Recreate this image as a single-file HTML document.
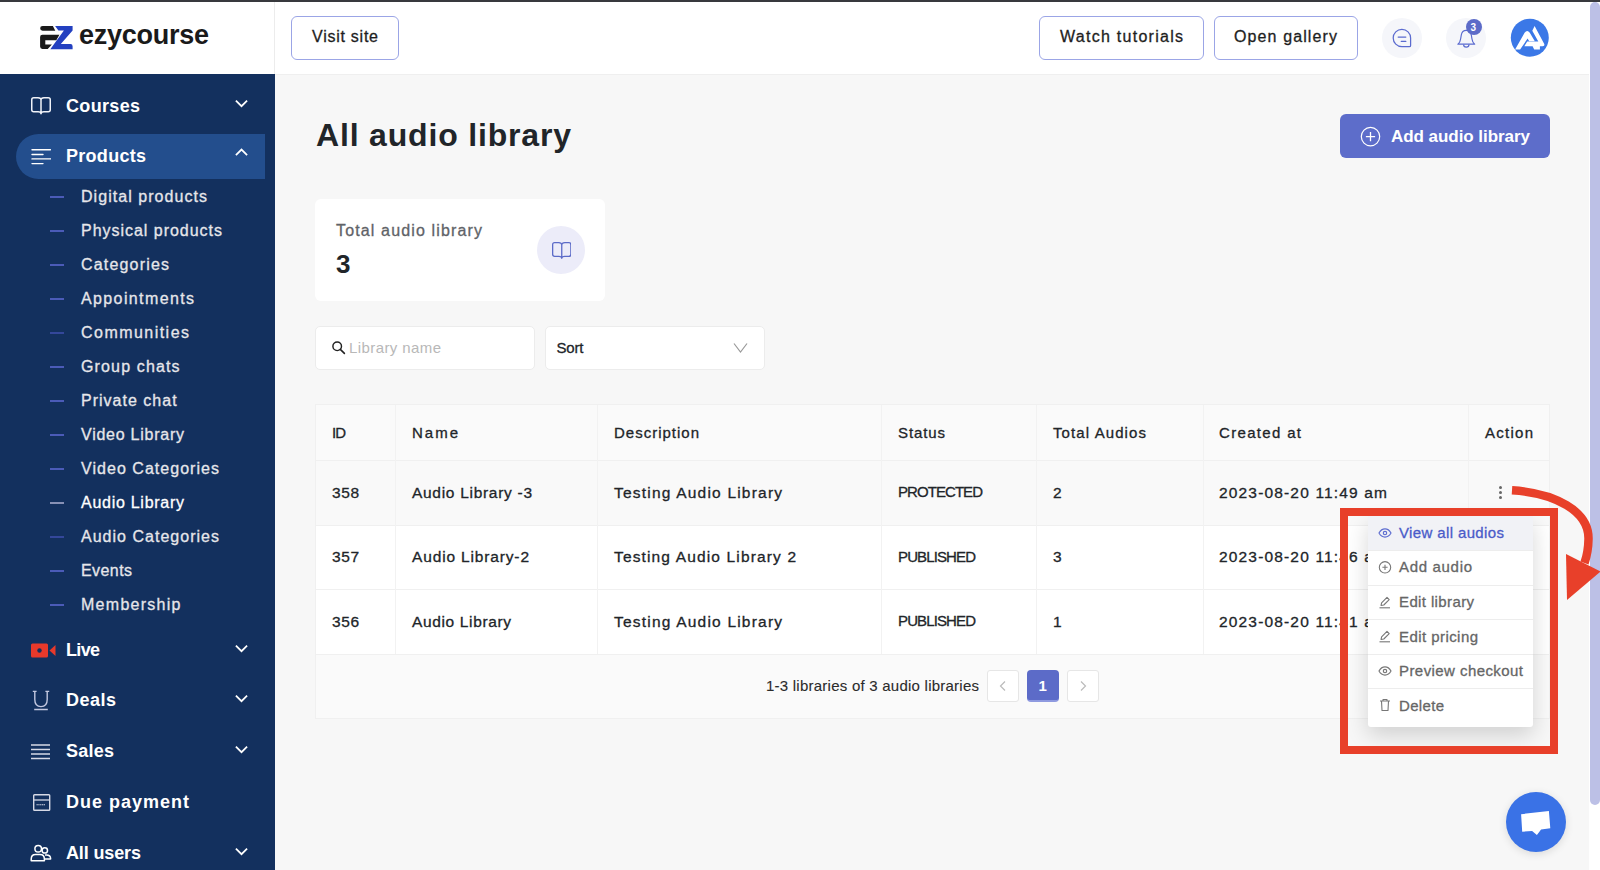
<!DOCTYPE html>
<html><head><meta charset="utf-8"><style>
html,body{margin:0;padding:0;width:1600px;height:870px;overflow:hidden;background:#f7f7f7}
body{position:relative;font-family:"Liberation Sans",sans-serif}
.t{position:absolute;white-space:nowrap;line-height:1}
</style></head><body>
<div style="position:absolute;left:0px;top:0px;width:1600px;height:870px;background:#f7f7f7"></div>
<div style="position:absolute;left:0px;top:0px;width:1600px;height:2px;background:#38393d"></div>
<div style="position:absolute;left:0px;top:2px;width:1590px;height:72px;background:#fff"></div>
<div style="position:absolute;left:275px;top:74px;width:1315px;height:1px;background:#efefef"></div>
<div style="position:absolute;left:274px;top:2px;width:1px;height:72px;background:#ececec"></div>
<div style="position:absolute;left:0px;top:74px;width:275px;height:796px;background:#13305e"></div>
<div style="position:absolute;left:1589px;top:2px;width:11px;height:868px;background:#ffffff"></div>
<div style="position:absolute;left:1590px;top:2px;width:10px;height:803px;background:#bcc0e6;border-radius:5px"></div>
<svg style="position:absolute;left:36px;top:22px" width="40" height="30" viewBox="0 0 40 30">
<path d="M6.6 3.9 H16.9 L19.3 8.8 H6.6 A2.45 2.45 0 0 1 6.6 3.9Z" fill="#1a1a1a"/>
<path d="M6.4 12.8 H23.4 L20.3 18.3 H9.3 V22.4 H15.9 L11.7 26.9 H6.4 Q4.1 26.9 4.1 24.6 V15.1 Q4.1 12.8 6.4 12.8Z" fill="#1a1a1a"/>
<path d="M19.1 4 H36.6 V8.4 L24.8 22.1 H34.5 Q36.6 22.1 36.6 24.2 V27.2 H14.3 L27.9 8.4 H22.4Z" fill="#2340c0"/>
</svg>
<div class="t" style="top:22.14px;font-size:27px;color:#1a1a1a;font-weight:700;letter-spacing:-0.259px;left:79px;">ezycourse</div>
<div style="position:absolute;left:291px;top:16px;width:108px;height:44px;border:1px solid #9ba5e6;border-radius:6px;box-sizing:border-box;background:#fff"></div>
<div class="t" style="top:29.36px;font-size:16px;color:#1e1e1e;-webkit-text-stroke:0.3px #1e1e1e;letter-spacing:0.747px;left:312px;">Visit site</div>
<div style="position:absolute;left:1039px;top:16px;width:165px;height:44px;border:1px solid #9ba5e6;border-radius:6px;box-sizing:border-box;background:#fff"></div>
<div class="t" style="top:29.46px;font-size:16px;color:#1e1e1e;-webkit-text-stroke:0.3px #1e1e1e;letter-spacing:1.270px;left:1060px;">Watch tutorials</div>
<div style="position:absolute;left:1214px;top:16px;width:144px;height:44px;border:1px solid #9ba5e6;border-radius:6px;box-sizing:border-box;background:#fff"></div>
<div class="t" style="top:29.46px;font-size:16px;color:#1e1e1e;-webkit-text-stroke:0.3px #1e1e1e;letter-spacing:1.116px;left:1234px;">Open gallery</div>
<div style="position:absolute;left:1382px;top:18px;width:40px;height:40px;background:#f5f6fa;border-radius:50%"></div>
<div style="position:absolute;left:1446px;top:18px;width:40px;height:40px;background:#f5f6fa;border-radius:50%"></div>
<svg style="position:absolute;left:1391px;top:27px" width="22" height="22" viewBox="0 0 22 22">
<path d="M19.6 11 A8.7 8.7 0 1 0 10.9 19.7 H18.3 Q19.6 19.7 19.6 18.4Z" fill="none" stroke="#5b6bcf" stroke-width="1.25"/>
<path d="M7.2 10.1 H14.8 M10.3 14.4 H14.8" stroke="#5b6bcf" stroke-width="1.3" stroke-linecap="round"/>
</svg>
<svg style="position:absolute;left:1455px;top:27px" width="22" height="22" viewBox="0 0 22 22">
<path d="M2.9 17.2 Q5.2 15.5 5.6 12 L6.3 8 Q7 3.3 11.3 3.3 Q15.6 3.3 16.3 8 L17 12 Q17.4 15.5 19.7 17.2Z" fill="none" stroke="#5b6bcf" stroke-width="1.2" stroke-linejoin="round"/>
<path d="M8.6 17.4 A2.7 2.7 0 0 0 14 17.4" fill="none" stroke="#5b6bcf" stroke-width="1.2"/>
</svg>
<div style="position:absolute;left:1466px;top:19px;width:16px;height:16px;background:#5c6bc8;border-radius:50%"></div>
<div class="t" style="top:23.04px;font-size:10px;color:#fff;font-weight:700;left:1470.5px;">3</div>
<svg style="position:absolute;left:1508px;top:16px" width="44" height="44" viewBox="0 0 44 44">
<circle cx="21.8" cy="21.7" r="19" fill="#3b78e7"/>
<path d="M7.1 33.4 L16.6 16.8 Q19.2 13.2 21.8 16.8 L26.8 25.3 H21.2 L19.6 22.6 L12.1 33.4Z" fill="#fff"/>
<path d="M24.3 14.7 L26.6 9.9 L36.4 28.3 Q36.8 30.3 34.6 30.3 H31.9 V33.4 H26.2 L24.6 30.3 H16.3 L19.2 25.6 H30.3Z" fill="#fff"/>
</svg>
<div style="position:absolute;left:16px;top:134px;width:249px;height:45px;background:#234e8d;border-radius:23px 0 0 23px"></div>
<div class="t" style="top:96.76px;font-size:18px;color:#ffffff;font-weight:700;letter-spacing:0.329px;left:66px;">Courses</div>
<svg style="position:absolute;left:235px;top:99px" width="13" height="9" viewBox="0 0 13 9"><path d="M0.9 1.6 L6.5 7.2 L12.1 1.6" fill="none" stroke="#fff" stroke-width="1.75"/></svg>
<svg style="position:absolute;left:31px;top:97px" width="20" height="18.5" viewBox="0 0 20 18.5"><path d="M10.0 2.95 Q10.0 0.75 7.0 0.75 H2.75 Q0.75 0.75 0.75 2.75 V12.75 Q0.75 14.75 2.75 14.75 H7.0 Q10.0 14.75 10.0 16.75 M10.0 2.95 Q10.0 0.75 13.0 0.75 H17.25 Q19.25 0.75 19.25 2.75 V12.75 Q19.25 14.75 17.25 14.75 H13.0 Q10.0 14.75 10.0 16.75 V2.95" fill="none" stroke="#f0f2f8" stroke-width="1.5" stroke-linejoin="round"/></svg>
<div class="t" style="top:147.06px;font-size:18px;color:#ffffff;font-weight:700;letter-spacing:0.284px;left:66px;">Products</div>
<svg style="position:absolute;left:235px;top:148px" width="13" height="9" viewBox="0 0 13 9"><path d="M0.9 7.2 L6.5 1.6 L12.1 7.2" fill="none" stroke="#fff" stroke-width="1.75"/></svg>
<svg style="position:absolute;left:31px;top:148px" width="20" height="17" viewBox="0 0 20 17">
<path d="M1 1.8 H19.5 M1 6.5 H12 M1 10.9 H19.5 M1 15.6 H12" stroke="#fff" stroke-width="1.4" stroke-linecap="round"/>
</svg>
<div style="position:absolute;left:50px;top:196.3px;width:14px;height:1.5px;background:#4b5bb8"></div>
<div class="t" style="top:188.76px;font-size:16px;color:#e6e6ea;-webkit-text-stroke:0.3px #e6e6ea;letter-spacing:1.048px;left:81px;">Digital products</div>
<div style="position:absolute;left:50px;top:230.3px;width:14px;height:1.5px;background:#4b5bb8"></div>
<div class="t" style="top:222.76px;font-size:16px;color:#e6e6ea;-webkit-text-stroke:0.3px #e6e6ea;letter-spacing:0.976px;left:81px;">Physical products</div>
<div style="position:absolute;left:50px;top:264.3px;width:14px;height:1.5px;background:#4b5bb8"></div>
<div class="t" style="top:256.76px;font-size:16px;color:#e6e6ea;-webkit-text-stroke:0.3px #e6e6ea;letter-spacing:1.181px;left:81px;">Categories</div>
<div style="position:absolute;left:50px;top:298.3px;width:14px;height:1.5px;background:#4b5bb8"></div>
<div class="t" style="top:290.76px;font-size:16px;color:#e6e6ea;-webkit-text-stroke:0.3px #e6e6ea;letter-spacing:1.379px;left:81px;">Appointments</div>
<div style="position:absolute;left:50px;top:332.3px;width:14px;height:1.5px;background:#34479a"></div>
<div class="t" style="top:324.76px;font-size:16px;color:#e6e6ea;-webkit-text-stroke:0.3px #e6e6ea;letter-spacing:1.464px;left:81px;">Communities</div>
<div style="position:absolute;left:50px;top:366.3px;width:14px;height:1.5px;background:#4b5bb8"></div>
<div class="t" style="top:358.76px;font-size:16px;color:#e6e6ea;-webkit-text-stroke:0.3px #e6e6ea;letter-spacing:1.144px;left:81px;">Group chats</div>
<div style="position:absolute;left:50px;top:400.3px;width:14px;height:1.5px;background:#4b5bb8"></div>
<div class="t" style="top:392.76px;font-size:16px;color:#e6e6ea;-webkit-text-stroke:0.3px #e6e6ea;letter-spacing:1.011px;left:81px;">Private chat</div>
<div style="position:absolute;left:50px;top:434.3px;width:14px;height:1.5px;background:#4b5bb8"></div>
<div class="t" style="top:426.76px;font-size:16px;color:#e6e6ea;-webkit-text-stroke:0.3px #e6e6ea;letter-spacing:0.751px;left:81px;">Video Library</div>
<div style="position:absolute;left:50px;top:468.3px;width:14px;height:1.5px;background:#4b5bb8"></div>
<div class="t" style="top:460.76px;font-size:16px;color:#e6e6ea;-webkit-text-stroke:0.3px #e6e6ea;letter-spacing:1.036px;left:81px;">Video Categories</div>
<div style="position:absolute;left:50px;top:502.3px;width:14px;height:1.5px;background:#8790b5"></div>
<div class="t" style="top:494.76px;font-size:16px;color:#ffffff;-webkit-text-stroke:0.3px #ffffff;letter-spacing:0.727px;left:81px;">Audio Library</div>
<div style="position:absolute;left:50px;top:536.3px;width:14px;height:1.5px;background:#34479a"></div>
<div class="t" style="top:528.76px;font-size:16px;color:#e6e6ea;-webkit-text-stroke:0.3px #e6e6ea;letter-spacing:1.017px;left:81px;">Audio Categories</div>
<div style="position:absolute;left:50px;top:570.3px;width:14px;height:1.5px;background:#4b5bb8"></div>
<div class="t" style="top:562.76px;font-size:16px;color:#e6e6ea;-webkit-text-stroke:0.3px #e6e6ea;letter-spacing:0.417px;left:81px;">Events</div>
<div style="position:absolute;left:50px;top:604.3px;width:14px;height:1.5px;background:#4b5bb8"></div>
<div class="t" style="top:596.76px;font-size:16px;color:#e6e6ea;-webkit-text-stroke:0.3px #e6e6ea;letter-spacing:1.274px;left:81px;">Membership</div>
<div class="t" style="top:640.76px;font-size:18px;color:#ffffff;font-weight:700;letter-spacing:-0.673px;left:66px;">Live</div>
<svg style="position:absolute;left:235px;top:644px" width="13" height="9" viewBox="0 0 13 9"><path d="M0.9 1.6 L6.5 7.2 L12.1 1.6" fill="none" stroke="#fff" stroke-width="1.75"/></svg>
<svg style="position:absolute;left:31px;top:643px" width="25" height="15" viewBox="0 0 25 15">
<rect x="0" y="0.5" width="17" height="14" rx="1.5" fill="#e8392b"/><circle cx="8.5" cy="7.5" r="2.2" fill="#13305e"/>
<path d="M18.5 7.5 L24.5 2 V13Z" fill="#e8392b"/>
</svg>
<div class="t" style="top:690.96px;font-size:18px;color:#ffffff;font-weight:700;letter-spacing:0.492px;left:66px;">Deals</div>
<svg style="position:absolute;left:235px;top:694px" width="13" height="9" viewBox="0 0 13 9"><path d="M0.9 1.6 L6.5 7.2 L12.1 1.6" fill="none" stroke="#fff" stroke-width="1.75"/></svg>
<svg style="position:absolute;left:31px;top:689px" width="20" height="22" viewBox="0 0 20 22">
<path d="M3.8 2.3 V10.5 Q3.8 17.6 10 17.6 Q16.2 17.6 16.2 10.5 V2.3" fill="none" stroke="#c3c8e0" stroke-width="1.4"/>
<path d="M1.8 2.3 H5.6 M14.4 2.3 H18.2 M3.2 20.5 H16.8" stroke="#c3c8e0" stroke-width="1.3"/>
</svg>
<div class="t" style="top:742.16px;font-size:18px;color:#ffffff;font-weight:700;letter-spacing:0.240px;left:66px;">Sales</div>
<svg style="position:absolute;left:235px;top:745px" width="13" height="9" viewBox="0 0 13 9"><path d="M0.9 1.6 L6.5 7.2 L12.1 1.6" fill="none" stroke="#fff" stroke-width="1.75"/></svg>
<svg style="position:absolute;left:31px;top:744px" width="20" height="16" viewBox="0 0 20 16">
<path d="M0 1 H19 M0 5.5 H19 M0 10 H19 M0 14.5 H19" stroke="#d6d9e6" stroke-width="1.3"/>
</svg>
<div class="t" style="top:792.96px;font-size:18px;color:#ffffff;font-weight:700;letter-spacing:0.997px;left:66px;">Due payment</div>
<svg style="position:absolute;left:32px;top:793px" width="19" height="19" viewBox="0 0 19 19">
<rect x="1.7" y="1.7" width="16" height="15.6" rx="0.8" fill="none" stroke="#d6d9e6" stroke-width="1.4"/>
<path d="M1.7 7 H17.7" stroke="#d6d9e6" stroke-width="1.3"/>
<path d="M4.5 11.7 H13.5" stroke="#d6d9e6" stroke-width="1.1" stroke-dasharray="1.3 0.5"/>
</svg>
<div class="t" style="top:844.26px;font-size:18px;color:#ffffff;font-weight:700;letter-spacing:-0.129px;left:66px;">All users</div>
<svg style="position:absolute;left:235px;top:847px" width="13" height="9" viewBox="0 0 13 9"><path d="M0.9 1.6 L6.5 7.2 L12.1 1.6" fill="none" stroke="#fff" stroke-width="1.75"/></svg>
<svg style="position:absolute;left:30px;top:843px" width="23" height="20" viewBox="0 0 23 20">
<circle cx="8.2" cy="5.8" r="3.3" fill="none" stroke="#fff" stroke-width="1.5"/>
<circle cx="14.8" cy="7.4" r="2.7" fill="none" stroke="#fff" stroke-width="1.5"/>
<path d="M1.2 17.8 V16.2 Q1.2 11.6 5.6 11.6 H10 Q14.4 11.6 14.4 16.2 V17.8Z" fill="none" stroke="#fff" stroke-width="1.5" stroke-linejoin="round"/>
<path d="M15 11.9 H16.4 Q20.6 11.9 20.6 15.4 V15.9 H14.6" fill="none" stroke="#fff" stroke-width="1.5" stroke-linejoin="round"/>
</svg>
<div class="t" style="top:118.91px;font-size:32px;color:#212529;font-weight:700;letter-spacing:0.823px;left:316px;">All audio library</div>
<div style="position:absolute;left:1340px;top:114px;width:210px;height:44px;background:#5d6dca;border-radius:6px"></div>
<svg style="position:absolute;left:1360px;top:126px" width="21" height="21" viewBox="0 0 21 21">
<circle cx="10.5" cy="10.6" r="9.2" fill="none" stroke="#fff" stroke-width="1.2"/>
<path d="M10.5 6 V15.2 M5.9 10.6 H15.1" stroke="#fff" stroke-width="1.3"/>
</svg>
<div class="t" style="top:127.81px;font-size:17px;color:#fff;font-weight:700;letter-spacing:-0.050px;left:1391px;">Add audio library</div>
<div style="position:absolute;left:315px;top:199px;width:290px;height:102px;background:#fff;border-radius:6px"></div>
<div class="t" style="top:222.86px;font-size:16px;color:#5f6368;-webkit-text-stroke:0.3px #5f6368;letter-spacing:1.145px;left:336px;">Total audio library</div>
<div class="t" style="top:250.99px;font-size:26px;color:#212529;font-weight:700;left:336px;">3</div>
<div style="position:absolute;left:537px;top:226px;width:48px;height:48px;background:#ececf9;border-radius:50%"></div>
<svg style="position:absolute;left:551.5px;top:241.5px" width="19.5" height="18" viewBox="0 0 19.5 18"><path d="M9.75 2.85 Q9.75 0.65 6.75 0.65 H2.65 Q0.65 0.65 0.65 2.65 V12.35 Q0.65 14.35 2.65 14.35 H6.75 Q9.75 14.35 9.75 16.35 M9.75 2.85 Q9.75 0.65 12.75 0.65 H16.85 Q18.85 0.65 18.85 2.65 V12.35 Q18.85 14.35 16.85 14.35 H12.75 Q9.75 14.35 9.75 16.35 V2.85" fill="none" stroke="#5c6bc8" stroke-width="1.3" stroke-linejoin="round"/></svg>
<div style="position:absolute;left:315px;top:326px;width:220px;height:44px;background:#fff;border:1px solid #ececec;border-radius:5px;box-sizing:border-box"></div>
<svg style="position:absolute;left:331px;top:340px" width="15" height="15" viewBox="0 0 15 15">
<circle cx="6.2" cy="6.3" r="4.3" fill="none" stroke="#222" stroke-width="1.45"/>
<path d="M9.3 9.4 L13.4 13.4" stroke="#222" stroke-width="1.6" stroke-linecap="round"/>
</svg>
<div class="t" style="top:340.30px;font-size:15px;color:#b8b8b8;letter-spacing:0.406px;left:349px;">Library name</div>
<div style="position:absolute;left:545px;top:326px;width:220px;height:44px;background:#fff;border:1px solid #ececec;border-radius:5px;box-sizing:border-box"></div>
<div class="t" style="top:340.30px;font-size:15px;color:#212529;-webkit-text-stroke:0.3px #212529;letter-spacing:-0.170px;left:556.5px;">Sort</div>
<svg style="position:absolute;left:733px;top:342px" width="15" height="12" viewBox="0 0 15 12">
<path d="M1 1.5 L7.5 10 L14 1.5" fill="none" stroke="#9a9a9a" stroke-width="1.2"/>
</svg>
<div style="position:absolute;left:315px;top:404px;width:1235px;height:315px;background:#fafafa;border:1px solid #f0f0f0;box-sizing:border-box"></div>
<div style="position:absolute;left:316px;top:460px;width:1233px;height:66px;background:#f9f9f9"></div>
<div style="position:absolute;left:316px;top:526px;width:1233px;height:128px;background:#fff"></div>
<div style="position:absolute;left:316px;top:460px;width:1233px;height:1px;background:#f0f0f0"></div>
<div style="position:absolute;left:316px;top:525px;width:1233px;height:1px;background:#f0f0f0"></div>
<div style="position:absolute;left:316px;top:589px;width:1233px;height:1px;background:#f0f0f0"></div>
<div style="position:absolute;left:316px;top:654px;width:1233px;height:1px;background:#f0f0f0"></div>
<div style="position:absolute;left:395px;top:405px;width:1px;height:249px;background:#f2f2f2"></div>
<div style="position:absolute;left:597px;top:405px;width:1px;height:249px;background:#f2f2f2"></div>
<div style="position:absolute;left:881px;top:405px;width:1px;height:249px;background:#f2f2f2"></div>
<div style="position:absolute;left:1036px;top:405px;width:1px;height:249px;background:#f2f2f2"></div>
<div style="position:absolute;left:1203px;top:405px;width:1px;height:249px;background:#f2f2f2"></div>
<div style="position:absolute;left:1468px;top:405px;width:1px;height:249px;background:#f2f2f2"></div>
<div class="t" style="top:424.50px;font-size:15px;color:#212529;-webkit-text-stroke:0.3px #212529;letter-spacing:-1.000px;left:332px;">ID</div>
<div class="t" style="top:424.50px;font-size:15px;color:#212529;-webkit-text-stroke:0.3px #212529;letter-spacing:1.996px;left:412px;">Name</div>
<div class="t" style="top:424.50px;font-size:15px;color:#212529;-webkit-text-stroke:0.3px #212529;letter-spacing:0.997px;left:614px;">Description</div>
<div class="t" style="top:424.50px;font-size:15px;color:#212529;-webkit-text-stroke:0.3px #212529;letter-spacing:0.895px;left:898px;">Status</div>
<div class="t" style="top:424.50px;font-size:15px;color:#212529;-webkit-text-stroke:0.3px #212529;letter-spacing:1.101px;left:1053px;">Total Audios</div>
<div class="t" style="top:424.50px;font-size:15px;color:#212529;-webkit-text-stroke:0.3px #212529;letter-spacing:1.329px;left:1219px;">Created at</div>
<div class="t" style="top:424.50px;font-size:15px;color:#212529;-webkit-text-stroke:0.3px #212529;letter-spacing:1.262px;left:1485px;">Action</div>
<div class="t" style="top:484.68px;font-size:15.5px;color:#212529;-webkit-text-stroke:0.3px #212529;letter-spacing:0.570px;left:332px;">358</div>
<div class="t" style="top:484.68px;font-size:15.5px;color:#212529;-webkit-text-stroke:0.3px #212529;letter-spacing:0.706px;left:412px;">Audio Library -3</div>
<div class="t" style="top:484.68px;font-size:15.5px;color:#212529;-webkit-text-stroke:0.3px #212529;letter-spacing:1.206px;left:614px;">Testing Audio Library</div>
<div class="t" style="top:484.30px;font-size:15px;color:#212529;-webkit-text-stroke:0.3px #212529;letter-spacing:-0.938px;left:898px;">PROTECTED</div>
<div class="t" style="top:484.68px;font-size:15.5px;color:#212529;-webkit-text-stroke:0.3px #212529;left:1053px;">2</div>
<div class="t" style="top:484.68px;font-size:15.5px;color:#212529;-webkit-text-stroke:0.3px #212529;letter-spacing:1.163px;left:1219px;">2023-08-20 11:49 am</div>
<div class="t" style="top:549.18px;font-size:15.5px;color:#212529;-webkit-text-stroke:0.3px #212529;letter-spacing:0.570px;left:332px;">357</div>
<div class="t" style="top:549.18px;font-size:15.5px;color:#212529;-webkit-text-stroke:0.3px #212529;letter-spacing:0.849px;left:412px;">Audio Library-2</div>
<div class="t" style="top:549.18px;font-size:15.5px;color:#212529;-webkit-text-stroke:0.3px #212529;letter-spacing:1.145px;left:614px;">Testing Audio Library 2</div>
<div class="t" style="top:548.80px;font-size:15px;color:#212529;-webkit-text-stroke:0.3px #212529;letter-spacing:-0.878px;left:898px;">PUBLISHED</div>
<div class="t" style="top:549.18px;font-size:15.5px;color:#212529;-webkit-text-stroke:0.3px #212529;left:1053px;">3</div>
<div class="t" style="top:549.18px;font-size:15.5px;color:#212529;-webkit-text-stroke:0.3px #212529;letter-spacing:1.163px;left:1219px;">2023-08-20 11:46 am</div>
<div class="t" style="top:613.68px;font-size:15.5px;color:#212529;-webkit-text-stroke:0.3px #212529;letter-spacing:0.570px;left:332px;">356</div>
<div class="t" style="top:613.68px;font-size:15.5px;color:#212529;-webkit-text-stroke:0.3px #212529;letter-spacing:0.639px;left:412px;">Audio Library</div>
<div class="t" style="top:613.68px;font-size:15.5px;color:#212529;-webkit-text-stroke:0.3px #212529;letter-spacing:1.206px;left:614px;">Testing Audio Library</div>
<div class="t" style="top:613.30px;font-size:15px;color:#212529;-webkit-text-stroke:0.3px #212529;letter-spacing:-0.878px;left:898px;">PUBLISHED</div>
<div class="t" style="top:613.68px;font-size:15.5px;color:#212529;-webkit-text-stroke:0.3px #212529;left:1053px;">1</div>
<div class="t" style="top:613.68px;font-size:15.5px;color:#212529;-webkit-text-stroke:0.3px #212529;letter-spacing:1.163px;left:1219px;">2023-08-20 11:41 am</div>
<div style="position:absolute;left:1498.8999999999999px;top:486.0px;width:3.4px;height:3.4px;border-radius:50%;background:#666"></div>
<div style="position:absolute;left:1498.8999999999999px;top:490.8px;width:3.4px;height:3.4px;border-radius:50%;background:#666"></div>
<div style="position:absolute;left:1498.8999999999999px;top:495.6px;width:3.4px;height:3.4px;border-radius:50%;background:#666"></div>
<div class="t" style="top:677.70px;font-size:15px;color:#2b2b2b;-webkit-text-stroke:0.1px #2b2b2b;letter-spacing:0.239px;left:766px;">1-3 libraries of 3 audio libraries</div>
<div style="position:absolute;left:987px;top:670px;width:32px;height:32px;background:#fff;border:1px solid #e6e6e6;border-radius:3px;box-sizing:border-box"></div>
<svg style="position:absolute;left:997px;top:680px" width="12" height="12" viewBox="0 0 12 12"><path d="M8 1.5 L3.5 6 L8 10.5" fill="none" stroke="#bbb" stroke-width="1.2"/></svg>
<div style="position:absolute;left:1027px;top:670px;width:32px;height:32px;background:#5c6bc8;border-bottom:2px solid #8f9ae0;border-radius:4px;box-sizing:border-box"></div>
<div class="t" style="top:678.30px;font-size:15px;color:#fff;font-weight:700;left:1038.5px;">1</div>
<div style="position:absolute;left:1067px;top:670px;width:32px;height:32px;background:#fff;border:1px solid #e6e6e6;border-radius:3px;box-sizing:border-box"></div>
<svg style="position:absolute;left:1077px;top:680px" width="12" height="12" viewBox="0 0 12 12"><path d="M4 1.5 L8.5 6 L4 10.5" fill="none" stroke="#bbb" stroke-width="1.2"/></svg>
<div style="position:absolute;left:1368px;top:516px;width:165px;height:211px;background:#fff;box-shadow:0 8px 22px rgba(0,0,0,0.16);border-radius:3px"></div>
<div style="position:absolute;left:1368px;top:516px;width:165px;height:34.5px;background:#f1f2f6"></div>
<div class="t" style="top:524.70px;font-size:15px;color:#4a5bc9;-webkit-text-stroke:0.3px #4a5bc9;letter-spacing:0.372px;left:1399px;">View all audios</div>
<div class="t" style="top:559.30px;font-size:15px;color:#666;-webkit-text-stroke:0.3px #666;letter-spacing:0.680px;left:1399px;">Add audio</div>
<div class="t" style="top:593.90px;font-size:15px;color:#666;-webkit-text-stroke:0.3px #666;letter-spacing:0.377px;left:1399px;">Edit library</div>
<div class="t" style="top:628.50px;font-size:15px;color:#666;-webkit-text-stroke:0.3px #666;letter-spacing:0.436px;left:1399px;">Edit pricing</div>
<div class="t" style="top:663.10px;font-size:15px;color:#666;-webkit-text-stroke:0.3px #666;letter-spacing:0.430px;left:1399px;">Preview checkout</div>
<div class="t" style="top:697.70px;font-size:15px;color:#666;-webkit-text-stroke:0.3px #666;letter-spacing:0.328px;left:1399px;">Delete</div>
<div style="position:absolute;left:1368px;top:550.0px;width:165px;height:1px;background:#ededed"></div>
<div style="position:absolute;left:1368px;top:584.6px;width:165px;height:1px;background:#ededed"></div>
<div style="position:absolute;left:1368px;top:619.2px;width:165px;height:1px;background:#ededed"></div>
<div style="position:absolute;left:1368px;top:653.8px;width:165px;height:1px;background:#ededed"></div>
<div style="position:absolute;left:1368px;top:688.4px;width:165px;height:1px;background:#ededed"></div>
<svg style="position:absolute;left:1378px;top:527px" width="14" height="12" viewBox="0 0 14 12"><path d="M1 6 C3 2.4 5 1.9 7 1.9 C9 1.9 11 2.4 13 6 C11 9.6 9 10.1 7 10.1 C5 10.1 3 9.6 1 6Z" fill="none" stroke="#5d6dd0" stroke-width="1.15"/><circle cx="7" cy="6" r="1.7" fill="none" stroke="#5d6dd0" stroke-width="1.15"/></svg>
<svg style="position:absolute;left:1378px;top:560px" width="14" height="14" viewBox="0 0 14 14"><circle cx="7" cy="7.3" r="5.7" fill="none" stroke="#777" stroke-width="1.1"/><path d="M7 4.7 V9.9 M4.4 7.3 H9.6" stroke="#777" stroke-width="1.1"/></svg>
<svg style="position:absolute;left:1378px;top:594.7px" width="14" height="14" viewBox="0 0 14 14"><path d="M3 10.5 L3.6 7.8 L9 2.4 L11.2 4.6 L5.8 10Z" fill="none" stroke="#777" stroke-width="1.1" stroke-linejoin="round"/><path d="M1.5 12.8 H12" stroke="#777" stroke-width="1.1"/></svg>
<svg style="position:absolute;left:1378px;top:629.3px" width="14" height="14" viewBox="0 0 14 14"><path d="M3 10.5 L3.6 7.8 L9 2.4 L11.2 4.6 L5.8 10Z" fill="none" stroke="#777" stroke-width="1.1" stroke-linejoin="round"/><path d="M1.5 12.8 H12" stroke="#777" stroke-width="1.1"/></svg>
<svg style="position:absolute;left:1378px;top:665px" width="14" height="12" viewBox="0 0 14 12"><path d="M1 6 C3 2.4 5 1.9 7 1.9 C9 1.9 11 2.4 13 6 C11 9.6 9 10.1 7 10.1 C5 10.1 3 9.6 1 6Z" fill="none" stroke="#777" stroke-width="1.15"/><circle cx="7" cy="6" r="1.7" fill="none" stroke="#777" stroke-width="1.15"/></svg>
<svg style="position:absolute;left:1379px;top:698px" width="12" height="14" viewBox="0 0 12 14"><path d="M1 3 H11 M4 3 V1.5 H8 V3 M2.5 3 L3 12.5 H9 L9.5 3" fill="none" stroke="#777" stroke-width="1.1" stroke-linejoin="round"/></svg>
<div style="position:absolute;left:1340px;top:508px;width:218px;height:246px;border:8.5px solid #e8402a;box-sizing:border-box"></div>
<svg style="position:absolute;left:1500px;top:475px" width="100" height="140" viewBox="0 0 100 140">
<path d="M12 15.3 C55 18 89 36 88.5 64 Q88.3 77 84.5 88" fill="none" stroke="#e8402a" stroke-width="8.5"/>
<path d="M66 79 L67 125 L100.5 96.6Z" fill="#e8402a"/>
</svg>
<div style="position:absolute;left:1506px;top:792px;width:60px;height:60px;background:#3a72e6;border-radius:50%;box-shadow:0 2px 8px rgba(0,0,0,0.12)"></div>
<svg style="position:absolute;left:1520px;top:808px" width="32" height="28" viewBox="0 0 32 28">
<path d="M1.1 6.2 L28.9 3 L30.3 20.2 L21.1 21.6 L16.9 27.1 L12.1 23 L2.2 23.7Z" fill="#fff"/>
</svg>
</body></html>
